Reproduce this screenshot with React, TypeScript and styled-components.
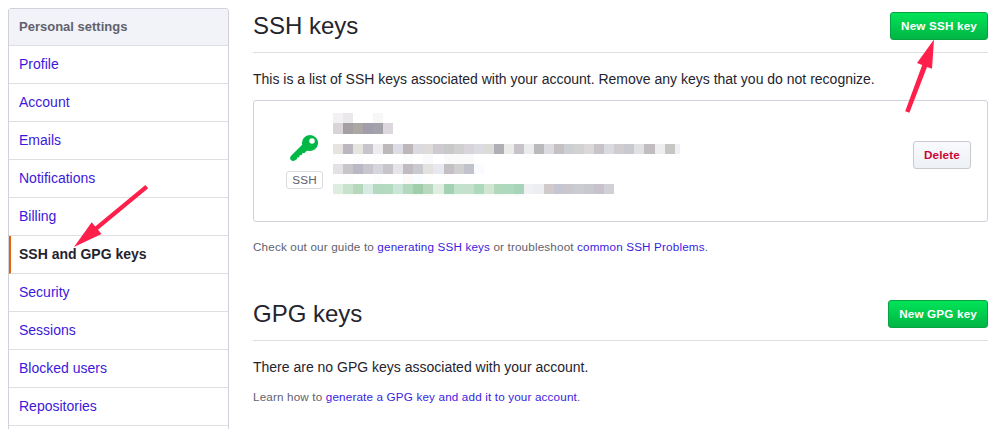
import React from 'react';
import styled, { createGlobalStyle } from 'styled-components';

const GlobalStyle = createGlobalStyle`
  * { box-sizing: border-box; }
  html, body { margin: 0; background: #fff; overflow: hidden; }
  body { font: 14px/20px "Liberation Sans", Arial, sans-serif; color: #24242e; }
  h1, p { margin: 0; font-weight: 400; }
`;

const Page = styled.div`
  position: relative;
  display: flex;
  gap: 24px;
  width: 998px;
  height: 429px;
  padding: 8px 10px 0 8px;
  overflow: hidden;
`;

const Menu = styled.nav`
  flex: none;
  width: 221px;
  height: 480px;
  border: 1px solid #d1d1db;
  border-radius: 3px;
`;

const MenuHeading = styled.div`
  height: 37px;
  padding: 0 10px;
  border-bottom: 1px solid #dedee3;
  border-radius: 2px 2px 0 0;
  background: #f2f3f8;
  color: #61616e;
  font-size: 13px;
  font-weight: 700;
  line-height: 35px;
`;

const MenuItem = styled.a<{ $active?: boolean }>`
  display: block;
  height: 38px;
  padding-left: ${(p) => (p.$active ? '8px' : '10px')};
  border-left: ${(p) => (p.$active ? '2px solid #e36209' : '0')};
  border-bottom: 1px solid #dedee3;
  color: ${(p) => (p.$active ? '#24242e' : '#3c18db')};
  font-weight: ${(p) => (p.$active ? 700 : 400)};
  line-height: 36px;
`;

const Main = styled.main`
  flex: 1;
`;

const SectionHeader = styled.header`
  display: flex;
  justify-content: space-between;
  align-items: flex-start;
  height: 45px;
  padding-top: 4px;
  border-bottom: 1px solid #dedee3;
`;

const Title = styled.h1`
  font-size: 24px;
  line-height: 28px;
`;

const Button = styled.button<{ $danger?: boolean }>`
  height: 28px;
  padding: 0 10px;
  border: 1px solid ${(p) => (p.$danger ? '#c8cace' : '#08a443')};
  border-radius: 3px;
  background: ${(p) =>
    p.$danger ? 'linear-gradient(#fafafd, #edf0f4)' : 'linear-gradient(#00e458, #00b544)'};
  color: ${(p) => (p.$danger ? '#cb0535' : '#fff')};
  font: 700 11.7px/24px "Liberation Sans", Arial, sans-serif;
  letter-spacing: 0.17px;
  white-space: nowrap;
`;

const Intro = styled.p`
  margin-top: 16px;
`;

const KeyCard = styled.div`
  display: flex;
  align-items: flex-start;
  height: 122px;
  margin-top: 11px;
  padding: 12px 16px 0 32px;
  border: 1px solid #d1d1db;
  border-radius: 3px;
`;

const KeyBadge = styled.div`
  display: flex;
  flex-direction: column;
  align-items: flex-start;
  width: 37px;
  margin-top: 20px;

  svg { margin-left: 4px; }
`;

const KeyLabel = styled.span`
  width: 37px;
  height: 18px;
  margin-top: 6px;
  border: 1px solid #dcdcdf;
  border-radius: 3px;
  color: #61616e;
  font-size: 11.7px;
  letter-spacing: 0.2px;
  line-height: 16px;
  text-align: center;
`;

const KeyDetails = styled.div`
  flex: 1;
  margin-left: 10px;
`;

const CellRow = styled.div<{ $height: number; $gap?: number }>`
  display: flex;
  height: ${(p) => p.$height}px;
  margin-top: ${(p) => p.$gap ?? 0}px;
`;

const Cell = styled.span<{ $color: string; $half?: boolean }>`
  flex: none;
  width: ${(p) => (p.$half ? 5 : 10.06)}px;
  background: ${(p) => p.$color};
`;

const DeleteSlot = styled.div`
  margin-top: 28px;
`;

const Note = styled.p<{ $tight?: boolean }>`
  margin-top: ${(p) => (p.$tight ? 10 : 15)}px;
  color: #61616e;
  font-size: 11.7px;
  letter-spacing: 0.152px;

  a { color: #3a1de0; }
`;

const GpgSection = styled.section`
  margin-top: 39px;
`;

const Overlay = styled.svg`
  position: absolute;
  inset: 0;
  pointer-events: none;
`;

const menuItems = [
  'Profile', 'Account', 'Emails', 'Notifications', 'Billing', 'SSH and GPG keys',
  'Security', 'Sessions', 'Blocked users', 'Repositories', '',
];

const redacted: { height: number; gap?: number; half?: boolean; colors: string }[] = [
  { height: 10, colors: 'f3f2f3 eae8ea fff fff f7f7f7' },
  { height: 11, colors: 'd9d4d7 a59ea2 aaa7a5 a29dab a3a1a9 dcd7dd' },
  {
    height: 10, gap: 10, half: true,
    colors:
      'e7e4e0 bab7c1 e7e5e0 c7c5cc eeecee bdb9bb dddde6 bdb7ba dbdae0 dfdbdb cfcad1 c8c9cb d0d0d0 d9d4da dddbe2 dbdbd8 b0afb5 ebebea c8c3cb ebecec bab9bb dcdbe1 c5c1c3 cccfd3 d2d2d3 dcd8da c8c3c9 d9dbe0 d1cccf c8cacf e1e0e2 c1bcc0 eeeef0 c8c5c5 eff0f3',
  },
  { height: 10, colors: 'fdfdfd fff fcfcfc fff fdfdfd fff fff fcfcfc fff fafafa fff fbfafa fafafa fbfafa' },
  { height: 10, colors: 'e3e1e3 c7c4ca b9b8c5 c8c6cc d5d6dd c7c4ca e5e4e9 c0bbc0 c8cacf e3e2e0 e8e9f0 c3bfc5 d0cfcf c1c2cc f8fbff' },
  { height: 10, colors: 'fefefe fdfdfd fff fff fdfdfd fff fff fcfaf9 fafdff fefefe fff fdfefe fefefe' },
  {
    height: 10,
    colors:
      'ddeddf c7e2cd b5d8bd d8ebe3 b3dac1 b4dabf c9e6d7 b2d8bd a0ceaa b8d9c0 dfeee1 a5d1b3 c3e2cd c5e0cc aed9bd d1e6d0 b1d8bb aed9be a8d5b9 f0f1f3 eceef1 d0cbca c5c6d2 cac8ce cbcbd1 c8c8cf c7c2cb cfd1d6',
  },
  { height: 2, colors: 'fbfefc fafdfa fafdfc fafefc fafdfc fafefc fafefc fafdfc f7fcf9 f9fdfa fdfefd f7fdfa f9fdfb fafdfb f8fcfa fcfdfb f8fcf9 f8fdfa f7fcf9' },
];

const KeyIcon = () => (
  <svg width="28" height="32" viewBox="0 0 14 16" fill="#00b846">
    <path
      fillRule="evenodd"
      d="M10 1a4 4 0 0 0-3.9 4.9L.55 11.4C-.1 12.1-.1 13 .45 13.55c.6.55 1.5.6 2.15.1L3.5 13l.1-.8 1.1-.1.1-1 1.2-.1.1-.9 1.2-.1L8.3 9l.8-.11A4 4 0 1 0 10 1zm1 4.38a1.38 1.38 0 1 1 0-2.76 1.38 1.38 0 0 1 0 2.76z"
    />
  </svg>
);

export default function App() {
  return (
    <Page>
      <GlobalStyle />
      <Menu>
        <MenuHeading>Personal settings</MenuHeading>
        {menuItems.map((label) => (
          <MenuItem key={label} $active={label === 'SSH and GPG keys'}>{label}</MenuItem>
        ))}
      </Menu>
      <Main>
        <section>
          <SectionHeader>
            <Title>SSH keys</Title>
            <Button>New SSH key</Button>
          </SectionHeader>
          <Intro>
            This is a list of SSH keys associated with your account. Remove any keys that you do not recognize.
          </Intro>
          <KeyCard>
            <KeyBadge>
              <KeyIcon />
              <KeyLabel>SSH</KeyLabel>
            </KeyBadge>
            <KeyDetails>
              {redacted.map((row, i) => {
                const colors = row.colors.split(' ');
                return (
                  <CellRow key={i} $height={row.height} $gap={row.gap}>
                    {colors.map((c, j) => (
                      <Cell key={j} $color={`#${c}`} $half={row.half && j === colors.length - 1} />
                    ))}
                  </CellRow>
                );
              })}
            </KeyDetails>
            <DeleteSlot>
              <Button $danger>Delete</Button>
            </DeleteSlot>
          </KeyCard>
          <Note>
            Check out our guide to <a>generating SSH keys</a> or troubleshoot <a>common SSH Problems</a>.
          </Note>
        </section>
        <GpgSection>
          <SectionHeader>
            <Title>GPG keys</Title>
            <Button>New GPG key</Button>
          </SectionHeader>
          <Intro>There are no GPG keys associated with your account.</Intro>
          <Note $tight>
            Learn how to <a>generate a GPG key and add it to your account</a>.
          </Note>
        </GpgSection>
      </Main>
      <Overlay width="998" height="429" fill="#ff1f4b">
        <path d="M74 247 91.7 222.2 95.2 226.4 145.4 184.9 148.2 188.3 98 229.8 101.5 234z" />
        <path d="M934 39.5 932 68.7 927 66.9 909.4 112.8 905.2 111.2 922.2 65 917 63z" />
      </Overlay>
    </Page>
  );
}
